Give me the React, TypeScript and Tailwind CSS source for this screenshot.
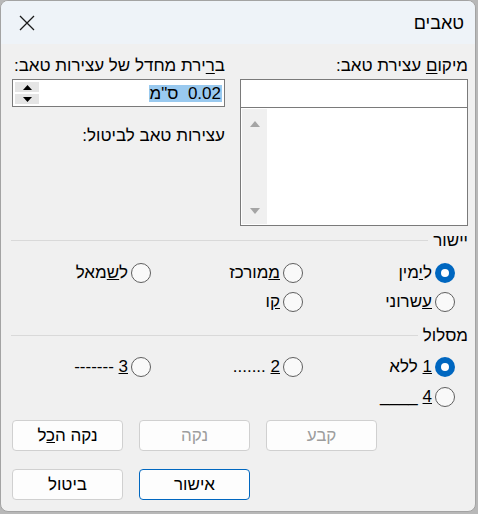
import React from 'react';

const FONT = "font-['Liberation_Sans',Arial,sans-serif]";

function Radio({ checked }: { checked?: boolean }) {
  if (checked) {
    return (
      <span className="w-[20px] h-[20px] rounded-full bg-[#0067c0] flex items-center justify-center shrink-0">
        <span className="w-[8px] h-[8px] rounded-full bg-white" />
      </span>
    );
  }
  return <span className="w-[20px] h-[20px] rounded-full border border-[#5f5f5f] bg-[#f9f9f9] shrink-0" />;
}

function Option({ checked, children }: { checked?: boolean; children: React.ReactNode }) {
  return (
    <div className="w-[152px] flex items-center gap-[3px] shrink-0">
      <Radio checked={checked} />
      <span className="whitespace-pre">{children}</span>
    </div>
  );
}

function GroupTitle({ label }: { label: string }) {
  return (
    <div className="flex items-start gap-[5px] h-[20px]">
      <span className="shrink-0">{label}</span>
      <div className="flex-1 h-px bg-[#d9d9d9] mt-[9px]" />
    </div>
  );
}

function Triangle({ up, color, w, h }: { up?: boolean; color: string; w: number; h: number }) {
  return (
    <svg width={w} height={h} viewBox={`0 0 ${w} ${h}`}>
      <polygon points={up ? `0,${h} ${w / 2},0 ${w},${h}` : `0,0 ${w},0 ${w / 2},${h}`} fill={color} />
    </svg>
  );
}

function Btn({ children, disabled, primary }: { children: React.ReactNode; disabled?: boolean; primary?: boolean }) {
  return (
    <button
      className={`w-[111px] h-[31px] rounded-[4px] border bg-[#fdfdfd] text-[17px] leading-[20px] ${
        primary ? 'border-[#0067c0]' : 'border-[#d0d0d0]'
      } ${disabled ? 'text-[#9d9d9d]' : 'text-black'}`}
    >
      {children}
    </button>
  );
}

export default function App() {
  return (
    <div className={`w-[478px] h-[514px] bg-[#b8b8b8] ${FONT}`}>
      <div
        dir="rtl"
        className="w-[476px] h-[512px] rounded-[8px] border border-[#a3a3a3] bg-[#f0f0f0] overflow-hidden text-[17px] leading-[20px] text-black"
      >
        {/* Title bar */}
        <div className="h-[43px] bg-[#eef3f8] flex items-center justify-between pr-[11px] pl-[18px]">
          <span className="text-[18px]">טאבים</span>
          <svg width="16" height="16" viewBox="0 0 16 16" className="mt-[1px]">
            <path d="M1 1 L15 15 M15 1 L1 15" stroke="#1a1a1a" strokeWidth="1.3" />
          </svg>
        </div>

        <div className="pr-[7px] pl-[10px]">
          {/* Top: position + default stops */}
          <div className="flex gap-[15px] pt-[12px]">
            <div className="w-[228px] shrink-0">
              <div>
                מיקו<u className="underline-offset-2">ם</u> עצירת טאב:
              </div>
              <div className="mt-[3px] h-[29px] border border-[#7a7a7a] bg-white" />
              <div className="h-[118px] border border-[#7a7a7a] border-t-0 bg-white p-[1px] flex">
                <div className="flex-1" />
                <div className="w-[25px] bg-[#f0f0f0] flex flex-col items-center justify-between pt-[12px] pb-[10px]">
                  <Triangle up color="#a5a5a5" w={10} h={6} />
                  <Triangle color="#a5a5a5" w={10} h={6} />
                </div>
              </div>
            </div>

            <div className="w-[213px] shrink-0">
              <div>
                ב<u className="underline-offset-2">ר</u>ירת מחדל של עצירות טאב:
              </div>
              <div className="mt-[3px] h-[28px] border border-[#7a7a7a] bg-white flex items-center pr-[2px] pl-[2px]">
                <span className="bg-[#99c9ef] h-[17px] leading-[17px] px-[1px] whitespace-pre">0.02  ס"מ</span>
                <div className="flex-1" />
                <div className="w-[24px] h-[22px] flex flex-col justify-between">
                  <div className="h-[10px] bg-[#e5e5e5] flex items-center justify-center">
                    <Triangle up color="#000" w={9} h={5} />
                  </div>
                  <div className="h-[10px] bg-[#e5e5e5] flex items-center justify-center">
                    <Triangle color="#000" w={9} h={5} />
                  </div>
                </div>
              </div>
              <div className="mt-[19px]">עצירות טאב לביטול:</div>
            </div>
          </div>

          {/* Alignment */}
          <div className="mt-[5px]">
            <GroupTitle label="יישור" />
            <div className="pr-[13px] mt-[7px]">
              <div className="flex h-[29px] items-center">
                <Option checked>
                  ל<u>י</u>מין
                </Option>
                <Option>
                  <u>מ</u>מורכז
                </Option>
                <Option>
                  ל<u>ש</u>מאל
                </Option>
              </div>
              <div className="flex h-[29px] items-center">
                <Option>
                  <u>ע</u>שרוני
                </Option>
                <Option>
                  <u>ק</u>ו
                </Option>
              </div>
            </div>
          </div>

          {/* Leader */}
          <div className="mt-[10px]">
            <GroupTitle label="מסלול" />
            <div className="pr-[13px] mt-[6px]">
              <div className="flex h-[30px] items-center">
                <Option checked>
                  <u>1</u> ללא
                </Option>
                <Option>
                  <u>2</u> .......
                </Option>
                <Option>
                  <u>3</u> -------
                </Option>
              </div>
              <div className="flex h-[30px] items-center">
                <Option>
                  <u>4</u> ____
                </Option>
              </div>
            </div>
          </div>

          {/* Buttons */}
          <div className="flex justify-end gap-[16px] mt-[8px] pl-[1px]">
            <Btn disabled>קבע</Btn>
            <Btn disabled>נקה</Btn>
            <Btn>
              נקה ה<u>כ</u>ל
            </Btn>
          </div>
          <div className="flex justify-end gap-[16px] mt-[18px] pl-[1px]">
            <Btn primary>אישור</Btn>
            <Btn>ביטול</Btn>
          </div>
        </div>
      </div>
    </div>
  );
}
